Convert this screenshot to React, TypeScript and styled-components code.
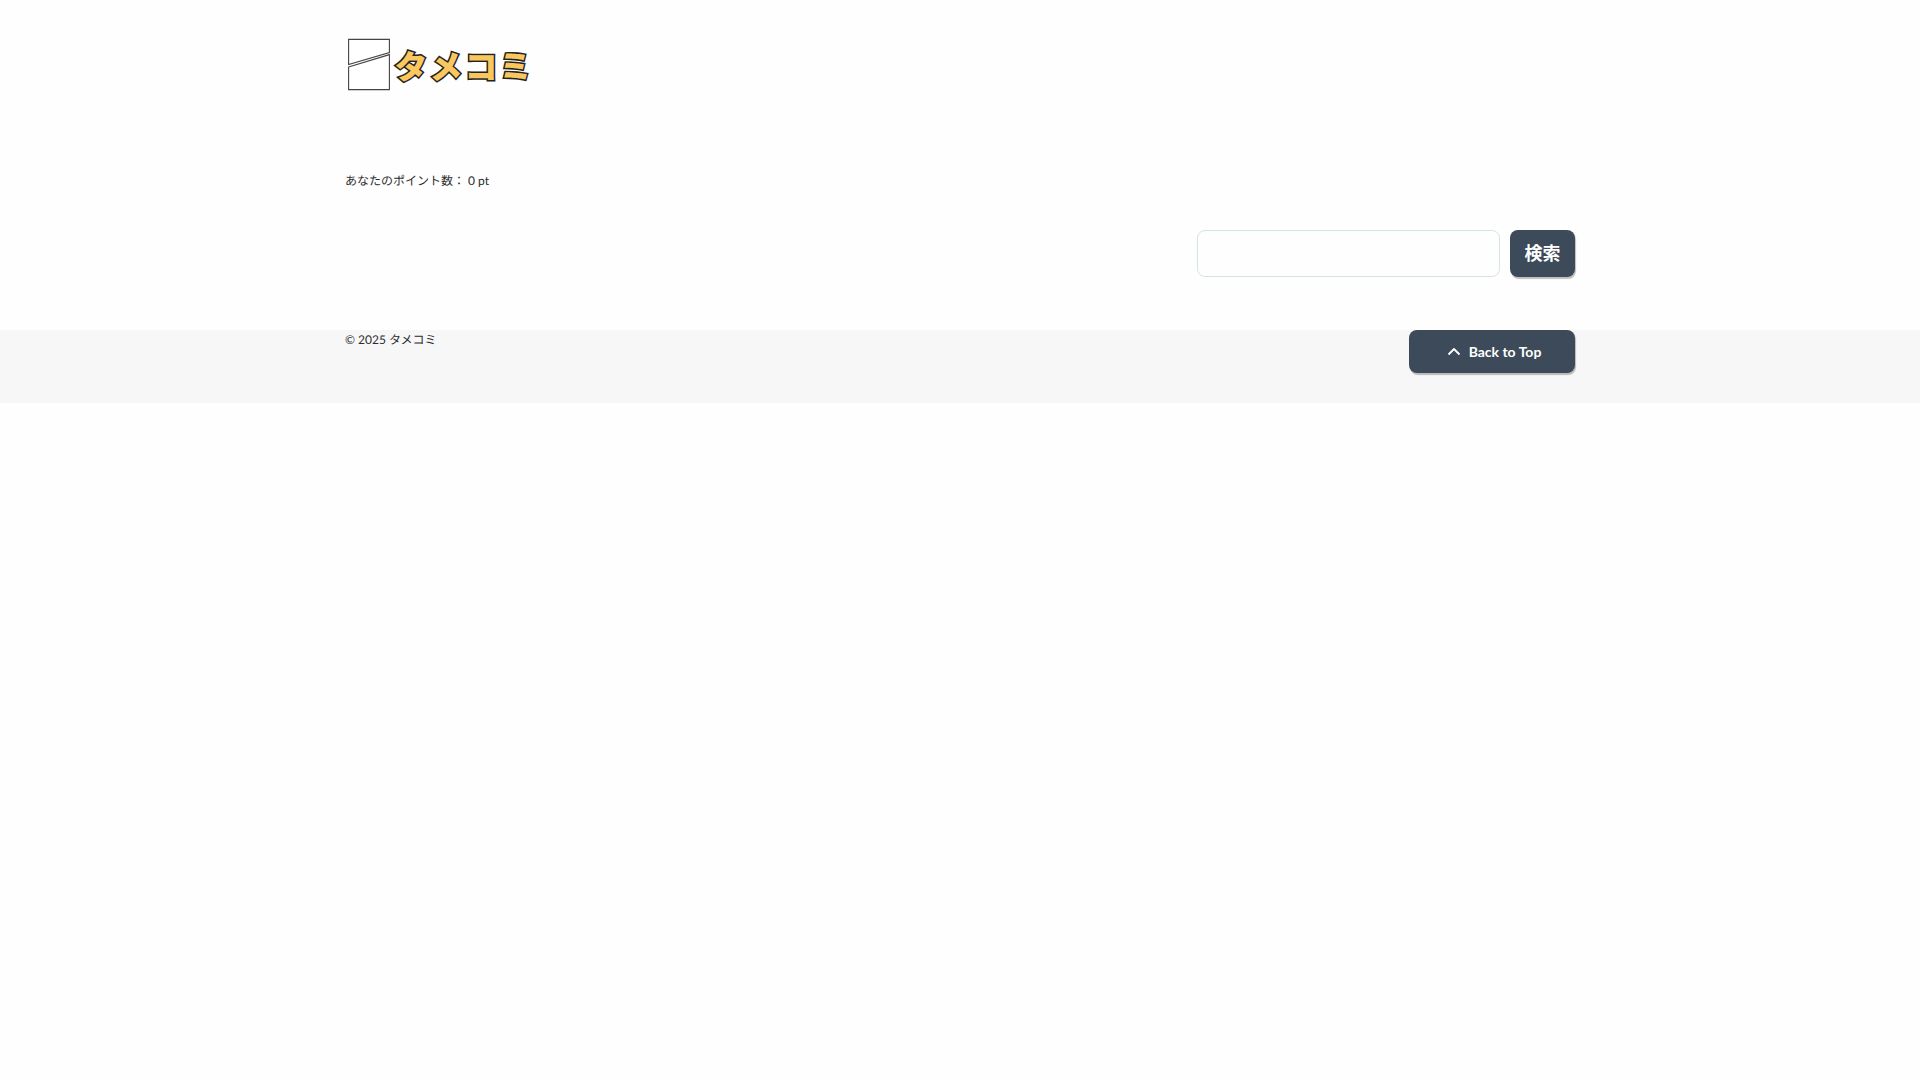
import React from "react";
import styled, { createGlobalStyle } from "styled-components";

const GlobalStyle = createGlobalStyle`
  *, *::before, *::after { box-sizing: border-box; }
  body {
    margin: 0;
    background: #fefefe;
    color: #2c2c2c;
    font-family: Lato, "Noto Sans CJK JP", sans-serif;
    font-size: 12px;
    line-height: 20px;
    text-rendering: geometricPrecision;
  }
`;

const Container = styled.div`
  width: 100%;
  max-width: 1230px;
  margin: 0 auto;
`;

const Header = styled.header`
  padding: 32px 0 75px;
`;

const LogoLink = styled.a`
  display: inline-block;
  vertical-align: top;
  svg { display: block; }
`;

const LogoText = styled.text`
  font-family: "Noto Sans CJK JP", sans-serif;
  font-weight: 900;
  font-size: 33px;
  text-anchor: middle;
  fill: #fac75e;
  stroke: #222;
  stroke-width: 3px;
  stroke-linejoin: miter;
  paint-order: stroke;
`;

const Points = styled.p`
  margin: 0;
`;

const SearchForm = styled.form`
  display: flex;
  justify-content: flex-end;
  gap: 10px;
  padding: 39px 0 53px;
`;

const SearchInput = styled.input`
  width: 303px;
  height: 47px;
  padding: 0 12px;
  border: 1px solid #d5e5e3;
  border-radius: 8px;
  background: #fefefe;
  font: inherit;
  font-size: 16px;
`;

const Button = styled.button<{ $size: "search" | "top" }>`
  display: flex;
  align-items: center;
  justify-content: center;
  gap: 8px;
  width: ${(p) => (p.$size === "search" ? "65px" : "166px")};
  height: ${(p) => (p.$size === "search" ? "47px" : "43px")};
  padding: ${(p) => (p.$size === "search" ? "0 0 4px" : "0 0 0 4px")};
  border: 0;
  border-radius: 8px;
  background: #3c4a59;
  color: #fff;
  box-shadow: 1px 2px 1px rgba(0, 0, 0, 0.25);
  font-family: inherit;
  font-weight: 700;
  font-size: ${(p) => (p.$size === "search" ? "18px" : "14px")};
  cursor: pointer;
`;

const Footer = styled.footer`
  background: #f7f7f7;
  padding-bottom: 30px;
`;

const FooterRow = styled(Container)`
  display: flex;
  justify-content: space-between;
  align-items: flex-start;
`;

const Logo = () => (
  <svg width="192" height="64" viewBox="0 0 192 64" role="img" aria-label="タメコミ">
    <g fill="#fff" stroke="#444" strokeWidth="1.1">
      <path d="M3.6 7.4H44.4V20.6L3.6 32.6Z" />
      <path d="M3.6 35L44.4 22.6V57.6H3.6Z" />
    </g>
    <LogoText x="66 101 136 172" y="47 47 47 49" rotate="0 0 0 -8">タメコミ</LogoText>
  </svg>
);

const ChevronUp = () => (
  <svg width="14" height="14" viewBox="0 0 14 14" aria-hidden="true">
    <path d="M1.5 9.5L7 4L12.5 9.5" fill="none" stroke="#fff" strokeWidth="1.8" strokeLinejoin="round" />
  </svg>
);

export default function App() {
  return (
    <>
      <GlobalStyle />
      <Container>
        <Header>
          <LogoLink href="#"><Logo /></LogoLink>
        </Header>
        <main>
          <Points>あなたのポイント数： 0 pt</Points>
          <SearchForm role="search" onSubmit={(e) => e.preventDefault()}>
            <SearchInput type="text" aria-label="検索" />
            <Button $size="search" type="submit">検索</Button>
          </SearchForm>
        </main>
      </Container>
      <Footer>
        <FooterRow>
          <span>© 2025 タメコミ</span>
          <Button $size="top" type="button" onClick={() => window.scrollTo(0, 0)}>
            <ChevronUp />
            Back to Top
          </Button>
        </FooterRow>
      </Footer>
    </>
  );
}
